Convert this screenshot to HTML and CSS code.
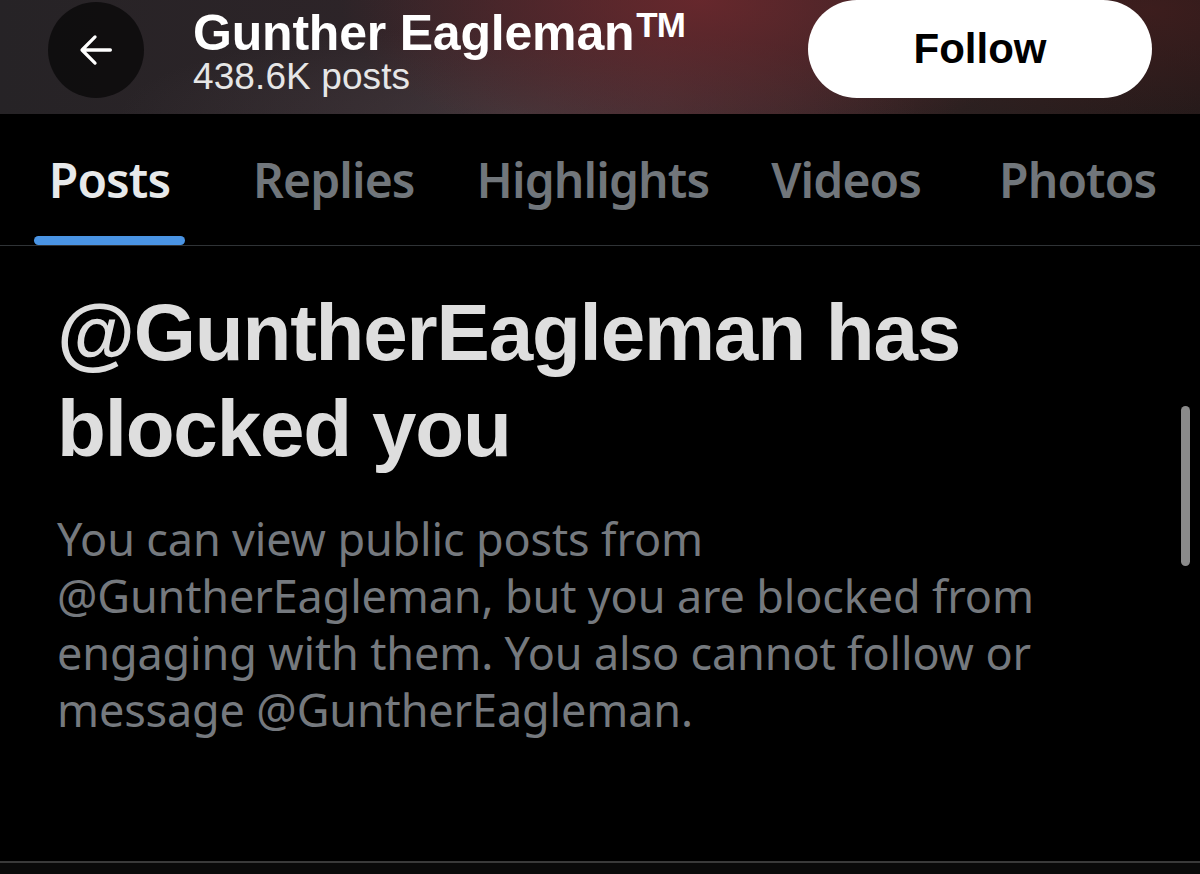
FILE: index.html
```html
<!DOCTYPE html>
<html lang="en">
<head>
<meta charset="utf-8">
<title>Gunther Eagleman</title>
<link rel="stylesheet" href="styles.css">
</head>
<body>
<div class="page">
  <header class="topbar">
    <button class="back" aria-label="Back">
      <svg viewBox="0 0 24 24" width="46" height="46"><path d="M19.5 12H5M11.5 5.2L4.7 12l6.8 6.8" fill="none" stroke="#fff" stroke-width="1.7" stroke-linecap="round" stroke-linejoin="round"/></svg>
    </button>
    <div class="who">
      <div class="name">Gunther Eagleman<span class="tm">TM</span></div>
      <div class="count">438.6K posts</div>
    </div>
    <button class="follow">Follow</button>
  </header>
  <nav class="tabs">
    <div class="tab active"><span>Posts</span><i class="bar"></i></div>
    <div class="tab"><span>Replies</span></div>
    <div class="tab"><span>Highlights</span></div>
    <div class="tab"><span>Videos</span></div>
    <div class="tab last"><span>Photos</span></div>
  </nav>
  <main class="content">
    <h1 class="title">@GuntherEagleman has blocked you</h1>
    <p class="desc">You can view public posts from<br>@GuntherEagleman, but you are blocked from<br>engaging with them. You also cannot follow or<br>message @GuntherEagleman.</p>
    <div class="scroll"></div>
  </main>
  <div class="bottom"></div>
</div>
</body>
</html>
```
FILE: styles.css
```css
html, body { margin: 0; padding: 0; background: #000; }
body { width: 1200px; height: 874px; overflow: hidden; font-family: "Liberation Sans", Arial, sans-serif; }
.page { display: flex; flex-direction: column; height: 874px; }

.topbar {
  height: 114px;
  display: flex;
  align-items: flex-start;
  box-sizing: border-box;
  padding: 2px 48px 0 48px;
  background:
    radial-gradient(ellipse 360px 160px at 700px 0px, rgba(110,40,45,0.85), rgba(110,40,45,0) 100%),
    radial-gradient(ellipse 300px 120px at 1150px 10px, rgba(70,30,30,0.7), rgba(70,30,30,0) 100%),
    radial-gradient(ellipse 400px 90px at 520px 114px, rgba(80,70,75,0.5), rgba(80,70,75,0) 100%),
    linear-gradient(90deg, #262326 0%, #2d2428 30%, #3a262a 55%, #2c2020 80%, #231a1a 100%);
}
.back {
  width: 96px; height: 96px; border-radius: 50%;
  background: rgba(12,10,12,0.85); border: 0; padding: 0;
  display: flex; align-items: center; justify-content: center;
  flex: none;
}
.who { margin-left: 49px; display: flex; flex-direction: column; padding-top: 6px; }
.name { color: #fff; font-weight: 700; font-size: 50px; line-height: 50px; letter-spacing: -0.2px; white-space: nowrap; }
.tm { font-size: 35px; vertical-align: top; line-height: 34px; margin-left: 2px; letter-spacing: -1px; }
.count { color: #e6e6e6; font-size: 37px; line-height: 38px; letter-spacing: 0.1px; }
.follow {
  margin-left: auto; width: 344px; height: 98px; border-radius: 49px; border: 0;
  background: #fff; color: #000; font-family: "Liberation Sans", Arial, sans-serif;
  font-weight: 700; font-size: 42px; margin-top: -2px; padding: 0;
}

.tabs {
  height: 132px; box-sizing: border-box;
  display: flex; gap: 62px; border-bottom: 1px solid #2f3336;
  padding-left: 34px;
}
.tab { position: relative; display: flex; justify-content: center; }
.tab span {
  font-family: "Noto Sans", sans-serif; font-weight: 600; font-size: 48px; color: #71767b;
  margin-top: 33px; letter-spacing: -0.9px; line-height: 66px;
}
.tab.active span { color: #e7e9ea; }
.tab.active { width: 151px; margin-right: 6px; }
.tab.last { margin-left: 16px; }
.bar { position: absolute; left: 0; right: 0; bottom: 0; height: 9px; border-radius: 5px; background: #4a94e4; }

.content { position: relative; flex: 1; padding: 0 57px; }
.title {
  margin: 39px 0 0 0; width: 980px; color: #dedede;
  font-family: "Liberation Sans", Arial, sans-serif; font-weight: 700; font-size: 80px; line-height: 96px;
  letter-spacing: -1.2px;
}
.desc {
  margin: 33px 0 0 0; color: #75797e; font-family: "Noto Sans", sans-serif; font-size: 45px; line-height: 57px;
  letter-spacing: -0.15px;
}
.scroll { position: absolute; right: 10px; top: 160px; width: 9px; height: 160px; border-radius: 5px; background: #8a8a8a; }
.bottom { height: 11px; border-top: 2px solid #3a3a3a; background: #0a0a0a; }
```
